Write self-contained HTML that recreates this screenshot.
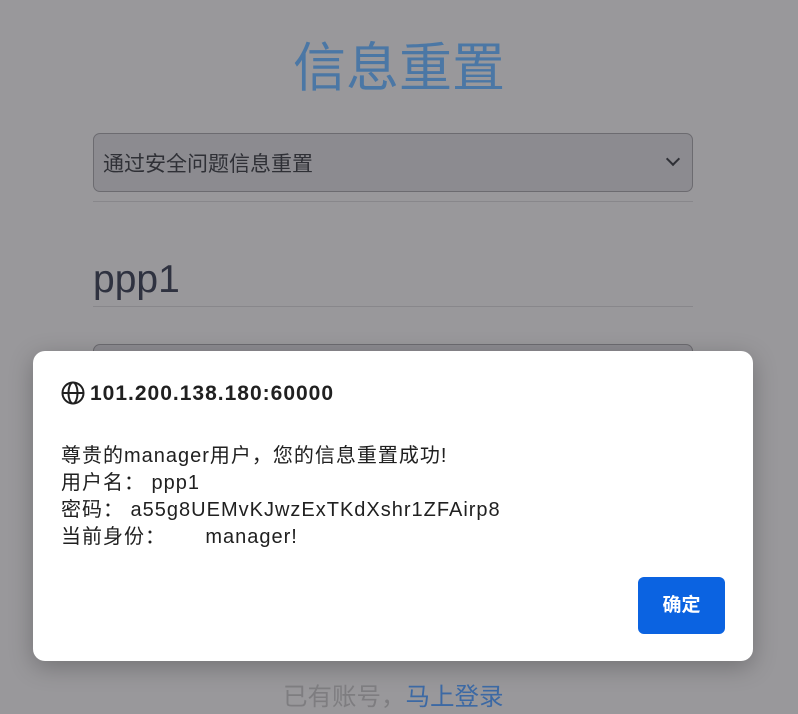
<!DOCTYPE html>
<html><head><meta charset="utf-8"><style>
body{margin:0;width:798px;height:714px;background:#99989b;position:relative;overflow:hidden;font-family:"Liberation Sans","Noto Sans CJK SC",sans-serif;}
.t{position:absolute;left:0;width:798px;top:32px;text-align:center;font-size:53px;color:#4b77a5;line-height:74px;}
.sel{position:absolute;left:93px;top:133px;width:598px;height:57px;border:1px solid #6c6b70;border-radius:7px;background:#8c8b90;}
.sel span{position:absolute;left:9px;top:14px;font-size:21px;color:#2f3036;}
.sel i{position:absolute;right:14px;top:20px;width:8px;height:8px;border-right:2px solid #2f3036;border-bottom:2px solid #2f3036;transform:rotate(45deg);}
.hr{position:absolute;left:93px;width:600px;height:1px;background:#88878b;}
.u{position:absolute;left:93px;top:258px;font-size:39px;color:#2f3240;}
.box2{position:absolute;left:93px;top:344px;width:598px;height:30px;border:1px solid #6c6b70;border-radius:7px;background:#8c8b90;}
.dlg{position:absolute;left:33px;top:351px;width:720px;height:310px;background:#fff;border-radius:12px;box-shadow:0 6px 24px rgba(0,0,0,.25);}
.h{position:absolute;left:28px;top:30px;font-size:21px;letter-spacing:1px;font-weight:bold;color:#202020;}
.h svg{vertical-align:-5px;margin-right:5px;}
.m{position:absolute;left:28px;top:92px;font-size:20px;letter-spacing:1px;line-height:27px;color:#202020;}
.b{position:absolute;left:605px;top:226px;width:87px;height:57px;background:#0b63e1;border-radius:6px;color:#fff;font-weight:bold;font-size:19px;text-align:center;line-height:57px;}
.f{position:absolute;top:678px;left:283px;font-size:24.5px;color:#7e7d80;}
.f span{color:#3c69a4;}
</style></head><body>
<div class="t">信息重置</div>
<div class="sel"><span>通过安全问题信息重置</span><i></i></div>
<div class="hr" style="top:201px"></div>
<div class="u">ppp1</div>
<div class="hr" style="top:306px"></div>
<div class="box2"></div>
<div class="dlg">
<div class="h"><svg width="24" height="24" viewBox="0 0 24 24" fill="none" stroke="#202020" stroke-width="2"><circle cx="12" cy="12" r="10.5"/><ellipse cx="12" cy="12" rx="4.5" ry="10.5"/><line x1="1.5" y1="12" x2="22.5" y2="12"/></svg>101.200.138.180:60000</div>
<div class="m">尊贵的manager用户，您的信息重置成功!<br>用户名：&nbsp;ppp1<br>密码：&nbsp;a55g8UEMvKJwzExTKdXshr1ZFAirp8<br>当前身份：&nbsp;&nbsp;&nbsp;&nbsp;&nbsp;&nbsp;manager!</div>
<div class="b">确定</div>
</div>
<div class="f">已有账号，<span>马上登录</span></div>
</body></html>
